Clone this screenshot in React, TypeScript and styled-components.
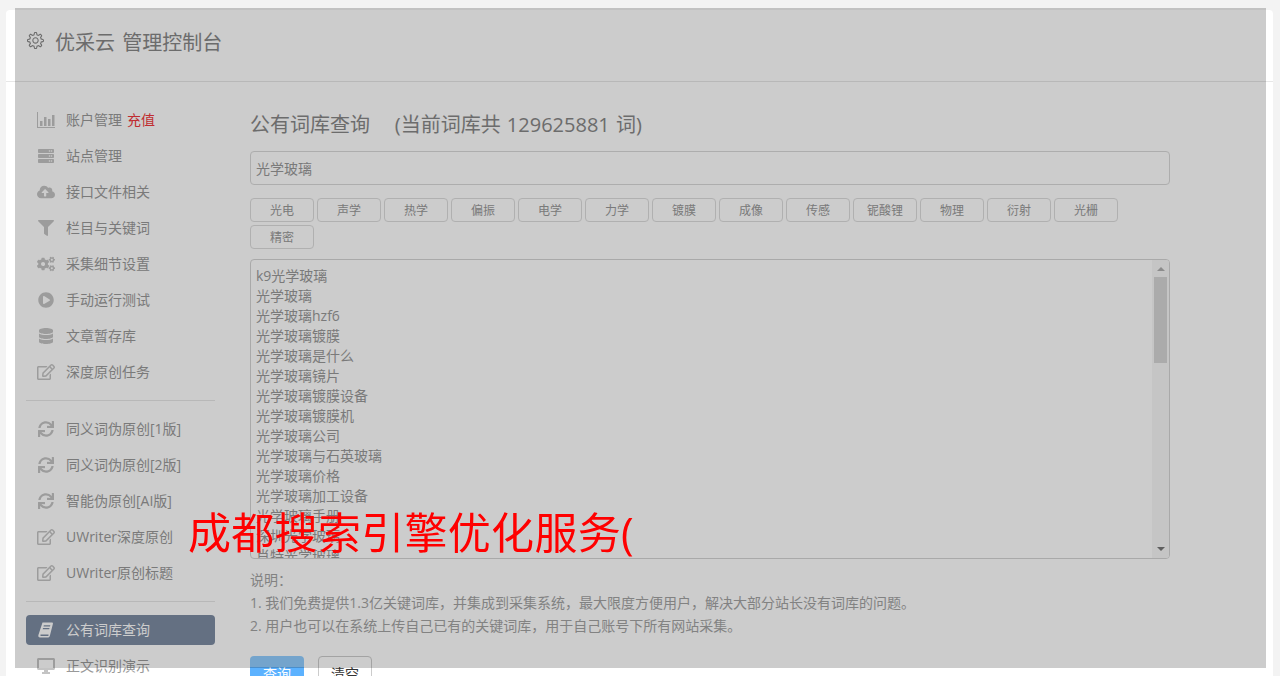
import React from 'react';
import styled, { createGlobalStyle } from 'styled-components';
import {
  FaServer,
  FaCloudUploadAlt,
  FaFilter,
  FaCogs,
  FaPlayCircle,
  FaDatabase,
  FaRegEdit,
  FaSync,
} from 'react-icons/fa';
import { SlSettings } from 'react-icons/sl';

const GlobalStyle = createGlobalStyle`
  html, body {
    margin: 0;
    padding: 0;
    height: 676px;
    overflow: hidden;
    background: #f3f3f3;
  }
  * {
    box-sizing: border-box;
  }
  body {
    font-family: "Open Sans", "Noto Sans CJK SC", sans-serif;
    font-size: 14px;
    color: #999;
  }
`;

const Page = styled.div`
  padding: 10px 7px 0 6px;
  height: 676px;
  overflow: hidden;
`;

const Card = styled.div`
  background: #fff;
  border-radius: 4px 4px 0 0;
  height: 700px;
`;

const Header = styled.header`
  height: 72px;
  padding: 21px 0 0 21px;
  border-bottom: 1px solid #e7e7e7;
  display: flex;
  align-items: flex-start;
  gap: 11px;
  font-size: 20px;
  line-height: 22px;
  word-spacing: 2px;
  color: #888;

  svg {
    width: 17px;
    height: 17px;
    margin-top: 1px;
    color: #888;
  }

  span {
    margin-top: 1px;
  }
`;

const Layout = styled.div`
  display: flex;
  padding: 22px 0 0 20px;
`;

const Sidebar = styled.nav`
  width: 189px;
  flex-shrink: 0;
  margin-top: 1px;
`;

const NavItem = styled.div<{ $active?: boolean }>`
  height: 30px;
  margin-bottom: 6px;
  padding-left: 11px;
  display: flex;
  align-items: center;
  border-radius: 4px;
  font-size: 14px;
  color: ${(p) => (p.$active ? '#fff' : '#999')};
  background: ${(p) => (p.$active ? '#7d8ca3' : 'transparent')};

  svg {
    width: 18px;
    height: 16px;
    flex-shrink: 0;
    color: ${(p) => (p.$active ? '#fff' : '#c4c4c4')};
  }
`;

const NavLabel = styled.span`
  margin: -2px 0 0 11px;
`;

const Recharge = styled.em`
  font-style: normal;
  color: #f0373c;
  margin: -2px 0 0 5px;
`;

const Divider = styled.hr`
  border: 0;
  border-top: 1px solid #e7e7e7;
  margin: 13px 0;
`;

const Main = styled.main`
  margin-left: 35px;
  width: 920px;
`;

const Title = styled.h2`
  margin: 6px 0 11px;
  font-size: 20px;
  font-weight: 400;
  line-height: 30px;
  word-spacing: 1px;
  color: #888;
  white-space: pre;
`;

const SearchBox = styled.div`
  height: 34px;
  border: 1px solid #d9d9d9;
  border-radius: 4px;
  padding: 0 5px;
  line-height: 34px;
  color: #999;
`;

const TagRow = styled.div`
  display: flex;
  flex-wrap: wrap;
  gap: 3px;
  margin: 13px 0 10px;
`;

const Tag = styled.button`
  width: 64px;
  height: 24px;
  padding: 0;
  background: transparent;
  border: 1px solid #ddd;
  border-radius: 4px;
  font-family: inherit;
  font-size: 12px;
  color: #999;
`;

const KeywordBox = styled.div`
  height: 300px;
  border: 1px solid #d4d4d4;
  border-radius: 4px;
  display: flex;
  overflow: hidden;
`;

const KeywordList = styled.div`
  flex: 1;
  padding: 6px 5px;
  font-size: 14px;
  line-height: 20px;
  color: #999;
  overflow: hidden;
`;

const ScrollTrack = styled.div`
  width: 17px;
  background: #f7f7f7;
  display: flex;
  flex-direction: column;
  align-items: center;
`;

const ArrowUp = styled.div`
  margin: 7px 0 6px;
  border: 4px solid transparent;
  border-top: 0;
  border-bottom: 4px solid #b0b0b0;
`;

const ScrollThumb = styled.div`
  width: 13px;
  height: 86px;
  background: #d6d6d6;
`;

const ArrowDown = styled.div`
  margin: auto 0 7px;
  border: 4px solid transparent;
  border-bottom: 0;
  border-top: 4px solid #777;
`;

const Notes = styled.div`
  margin-top: 9px;
  font-size: 14px;
  line-height: 23px;
  color: #a3a3a3;
`;

const Actions = styled.div`
  display: flex;
  gap: 14px;
  margin-top: 19px;
`;

const ActionButton = styled.button<{ $primary?: boolean }>`
  width: 54px;
  height: 34px;
  padding: 0;
  border-radius: 4px;
  border: 1px solid ${(p) => (p.$primary ? 'transparent' : '#ccc')};
  background: ${(p) => (p.$primary ? 'linear-gradient(#91ceff 11px, #5cb2ff 11px)' : '#fff')};
  background-origin: border-box;
  color: ${(p) => (p.$primary ? '#fff' : '#333')};
  font-family: inherit;
  font-size: 14px;
`;

const Mask = styled.div`
  position: fixed;
  top: 8px;
  left: 15px;
  width: 1251px;
  height: 660px;
  background: rgba(0, 0, 0, 0.2);
`;

const Headline = styled.div`
  position: fixed;
  top: 505px;
  left: 188px;
  font-size: 43px;
  letter-spacing: 0.3px;
  line-height: 56px;
  color: #f00;
  white-space: nowrap;
`;

const BarsIcon = () => (
  <svg viewBox="0 0 18 16" fill="currentColor">
    <rect x="0" y="0" width="1" height="16" />
    <rect x="0" y="15" width="18" height="1" />
    <rect x="3" y="9" width="2.5" height="5" />
    <rect x="7" y="5" width="2.5" height="9" />
    <rect x="11" y="7" width="2.5" height="7" />
    <rect x="15" y="3" width="2.5" height="11" />
  </svg>
);

const BookIcon = () => (
  <svg viewBox="0 0 18 16" fill="currentColor">
    <path
      fillRule="evenodd"
      d="M5.5 0.5H15.5L16 1.5L13 13.2C12.8 14.6 11.8 15.5 10.5 15.5H3C1.6 15.5 1 14.4 1.4 13ZM6.8 3.2L6.5 4.4H13L13.3 3.2ZM6 6L5.7 7.2H12.2L12.5 6ZM3.6 12.6C3.2 13.4 3.5 14.1 4.2 14.1H11C11.4 14.1 11.6 13.6 11.5 12.6Z"
    />
  </svg>
);

const MonitorIcon = () => (
  <svg viewBox="0 0 18 16" fill="currentColor">
    <path
      fillRule="evenodd"
      d="M1.5 0H16.5C17.3 0 18 .7 18 1.5V10.5C18 11.3 17.3 12 16.5 12H11V14H13V16H5V14H7V12H1.5C.7 12 0 11.3 0 10.5V1.5C0 .7 .7 0 1.5 0ZM2 2V10H16V2Z"
    />
  </svg>
);

const navGroups = [
  [
    { icon: BarsIcon, label: '账户管理', recharge: true },
    { icon: FaServer, label: '站点管理' },
    { icon: FaCloudUploadAlt, label: '接口文件相关' },
    { icon: FaFilter, label: '栏目与关键词' },
    { icon: FaCogs, label: '采集细节设置' },
    { icon: FaPlayCircle, label: '手动运行测试' },
    { icon: FaDatabase, label: '文章暂存库' },
    { icon: FaRegEdit, label: '深度原创任务' },
  ],
  [
    { icon: FaSync, label: '同义词伪原创[1版]' },
    { icon: FaSync, label: '同义词伪原创[2版]' },
    { icon: FaSync, label: '智能伪原创[AI版]' },
    { icon: FaRegEdit, label: 'UWriter深度原创' },
    { icon: FaRegEdit, label: 'UWriter原创标题' },
  ],
  [
    { icon: BookIcon, label: '公有词库查询', active: true },
    { icon: MonitorIcon, label: '正文识别演示' },
  ],
];

const tags = ['光电', '声学', '热学', '偏振', '电学', '力学', '镀膜', '成像', '传感', '铌酸锂', '物理', '衍射', '光栅', '精密'];

const keywords = [
  'k9光学玻璃',
  '光学玻璃',
  '光学玻璃hzf6',
  '光学玻璃镀膜',
  '光学玻璃是什么',
  '光学玻璃镜片',
  '光学玻璃镀膜设备',
  '光学玻璃镀膜机',
  '光学玻璃公司',
  '光学玻璃与石英玻璃',
  '光学玻璃价格',
  '光学玻璃加工设备',
  '光学玻璃手册',
  '深圳光学玻璃',
  '肖特光学玻璃',
];

export default function App() {
  return (
    <>
      <GlobalStyle />
      <Page>
        <Card>
          <Header>
            <SlSettings />
            <span>优采云 管理控制台</span>
          </Header>
          <Layout>
            <Sidebar>
              {navGroups.map((group, g) => (
                <React.Fragment key={g}>
                  {g > 0 && <Divider />}
                  {group.map((item) => (
                    <NavItem key={item.label} $active={'active' in item && item.active}>
                      <item.icon />
                      <NavLabel>{item.label}</NavLabel>
                      {'recharge' in item && <Recharge>充值</Recharge>}
                    </NavItem>
                  ))}
                </React.Fragment>
              ))}
            </Sidebar>
            <Main>
              <Title>{'公有词库查询    (当前词库共 129625881 词)'}</Title>
              <SearchBox>光学玻璃</SearchBox>
              <TagRow>
                {tags.map((t) => (
                  <Tag key={t}>{t}</Tag>
                ))}
              </TagRow>
              <KeywordBox>
                <KeywordList>
                  {keywords.map((k) => (
                    <div key={k}>{k}</div>
                  ))}
                </KeywordList>
                <ScrollTrack>
                  <ArrowUp />
                  <ScrollThumb />
                  <ArrowDown />
                </ScrollTrack>
              </KeywordBox>
              <Notes>
                <div>说明：</div>
                <div>1. 我们免费提供1.3亿关键词库，并集成到采集系统，最大限度方便用户，解决大部分站长没有词库的问题。</div>
                <div>2. 用户也可以在系统上传自己已有的关键词库，用于自己账号下所有网站采集。</div>
              </Notes>
              <Actions>
                <ActionButton $primary>查询</ActionButton>
                <ActionButton>清空</ActionButton>
              </Actions>
            </Main>
          </Layout>
        </Card>
      </Page>
      <Mask />
      <Headline>成都搜索引擎优化服务(</Headline>
    </>
  );
}
